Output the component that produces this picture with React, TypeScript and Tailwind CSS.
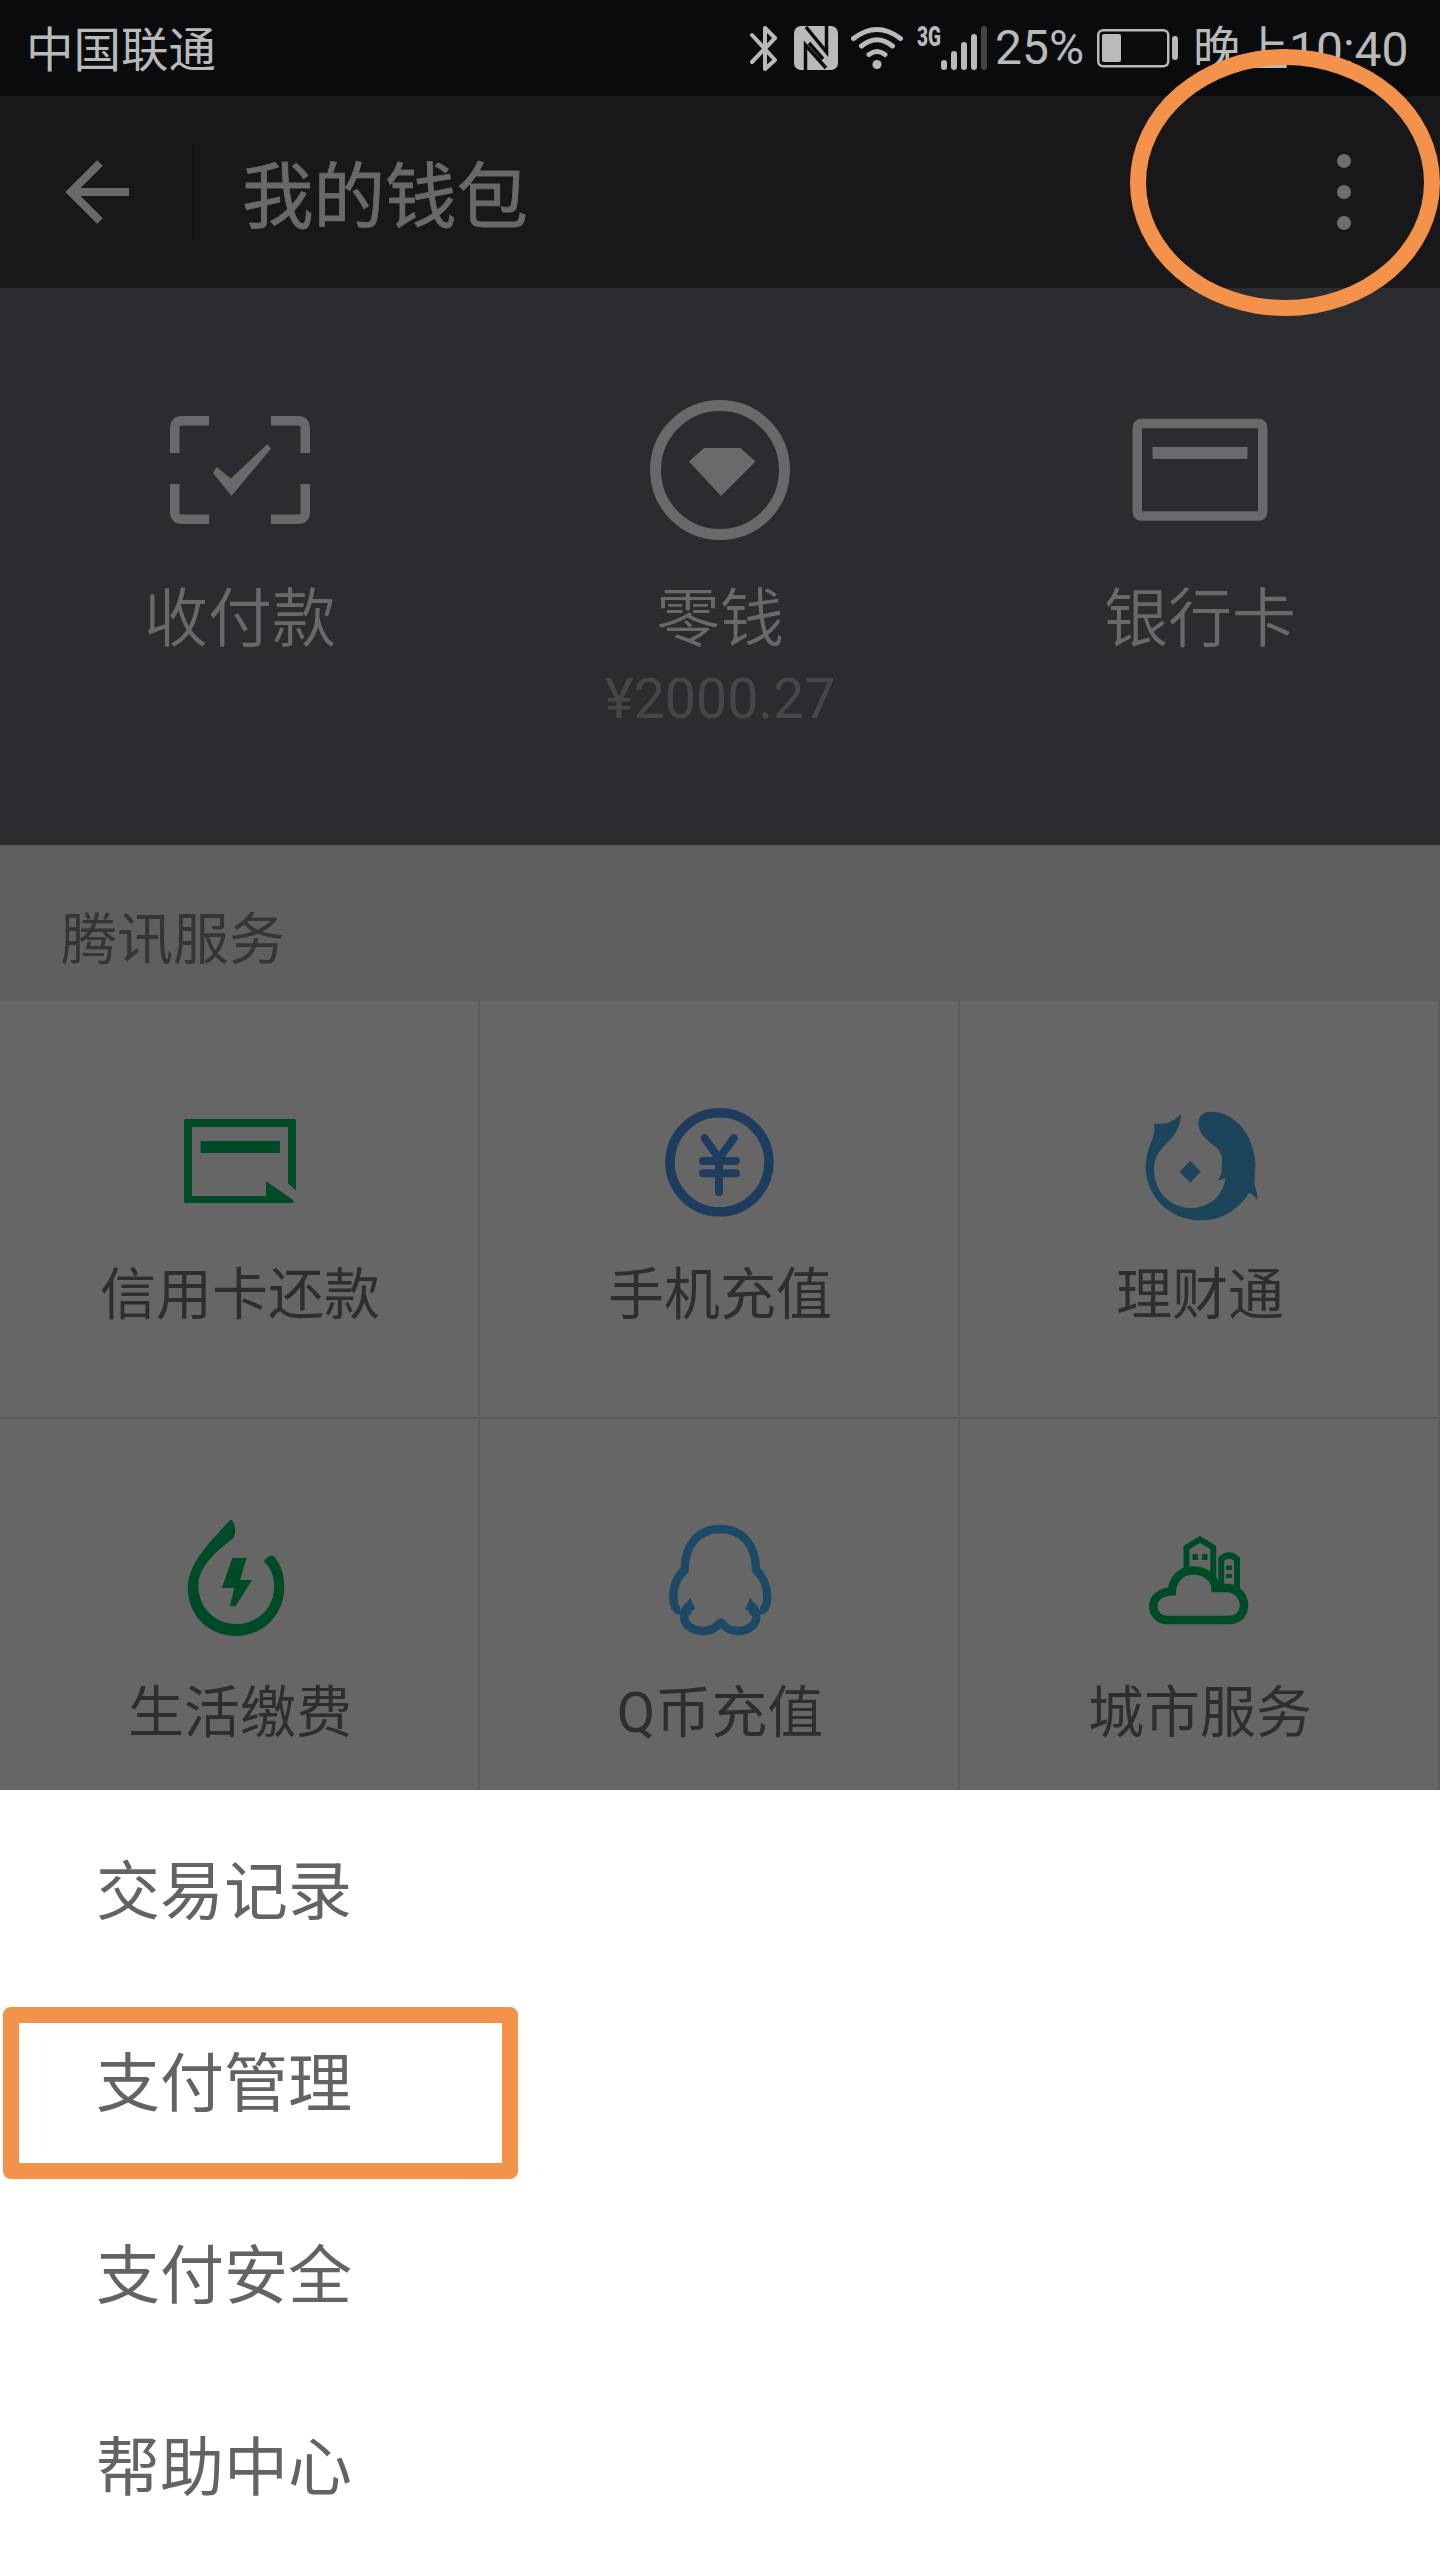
import type { ReactNode } from "react";

interface EntryProps {
  icon: ReactNode;
  label: string;
}

interface WalletEntryProps extends EntryProps {
  amount?: string;
}

const menuItems = ["交易记录", "支付管理", "支付安全", "帮助中心"];

function App() {
  return (
    <div className="relative flex flex-col w-[1440px] h-[2560px] overflow-hidden bg-[#666] font-[Roboto,'Noto_Sans_CJK_SC',sans-serif]">
      <StatusBar />

      {/* Title bar */}
      <header className="flex items-center h-48 bg-[#18181a] text-[#69696a]">
        <svg className="ml-[64px] w-[68px] h-[68px]" viewBox="0 0 68 68" fill="none" stroke="currentColor" strokeWidth="8">
          <path d="M65 34H8M36 5L7 34L36 63" />
        </svg>
        <div className="ml-[60px] w-[2px] h-24 bg-[#121214]" />
        <h1 className="ml-[48px] pt-[11px] text-[71.5px] leading-[96px] [-webkit-text-stroke:0.8px]">我的钱包</h1>
        <div className="flex flex-col gap-[17px] ml-auto mr-[89px]">
          <span className="w-[14px] h-[14px] rounded-full bg-[#6e6e70]" />
          <span className="w-[14px] h-[14px] rounded-full bg-[#6e6e70]" />
          <span className="w-[14px] h-[14px] rounded-full bg-[#6e6e70]" />
        </div>
      </header>

      {/* Wallet shortcuts */}
      <section className="grid grid-cols-3 h-[557px] pt-[112px] bg-[#2b2c30] text-[#69696a]">
        <WalletEntry icon={<ScanIcon />} label="收付款" />
        <WalletEntry icon={<ChangeIcon />} label="零钱" amount="¥2000.27" />
        <WalletEntry icon={<BankCardIcon />} label="银行卡" />
      </section>

      {/* Tencent services */}
      <h2 className="flex items-center h-[156px] pt-[34px] pl-[61px] bg-[#5f5f61] text-[56px] leading-[72px] text-[#353537]">
        腾讯服务
      </h2>
      <section className="grid grid-cols-3 grid-rows-[418px_371px]">
        <ServiceCell icon={<CreditCardIcon />} label="信用卡还款" />
        <ServiceCell icon={<TopUpIcon />} label="手机充值" />
        <ServiceCell icon={<LicaitongIcon />} label="理财通" />
        <ServiceCell icon={<UtilitiesIcon />} label="生活缴费" />
        <ServiceCell icon={<QCoinIcon />} label="Q币充值" />
        <ServiceCell icon={<CityIcon />} label="城市服务" />
      </section>

      {/* Bottom menu */}
      <ul className="flex flex-col h-[770px] pt-[7px] bg-white">
        {menuItems.map((item) => (
          <li
            key={item}
            className="relative flex items-center h-48 shrink-0 pl-24 text-[64px] leading-[80px] text-[#636363]"
          >
            {item}
            {item === "支付管理" && (
              <div className="absolute left-[3px] top-[18px] w-[515px] h-[172px] rounded-[8px] border-[16px] border-[#f2924b]" />
            )}
          </li>
        ))}
      </ul>

      {/* Highlight around the more button */}
      <div className="absolute left-[1130px] top-[49px] w-[310px] h-[267px] rounded-[50%] border-[16px] border-[#f2924b]" />
    </div>
  );
}

function StatusBar() {
  return (
    <div className="flex h-24 bg-[#0a0b0d] text-[#b9baba] text-[48px] leading-[96px]">
      <span className="pl-[26px] pt-[3px] w-[749px] shrink-0 text-[47.5px]">中国联通</span>

      {/* Bluetooth */}
      <svg className="w-[30px] h-24" viewBox="749 0 30 96" fill="none" stroke="currentColor" strokeWidth="4" strokeLinejoin="round" strokeLinecap="round">
        <path d="M752 35L775 60L765 69V28L775 38L752 62" />
      </svg>

      {/* NFC */}
      <svg className="ml-[15px] w-[44px] h-24" viewBox="794 0 44 96" fill="none">
        <rect x="794" y="26" width="44" height="44" rx="7" fill="currentColor" />
        <path d="M805.5 70V45L826 68M826.5 26V52L806 27M809 43L823 59" stroke="#0a0b0d" strokeWidth="3.5" />
      </svg>

      {/* Wi-Fi */}
      <svg className="ml-[12px] w-[54px] h-24" viewBox="850 0 54 96" fill="none" stroke="currentColor" strokeWidth="5" strokeLinecap="round">
        <path d="M853.5 38.5Q877 20.5 900.5 38.5M861.5 46Q877 33.5 892.5 46M869 54.5Q877 48.5 885 54.5" />
        <circle cx="877" cy="64.5" r="4.5" fill="currentColor" stroke="none" />
      </svg>

      {/* Signal */}
      <svg className="ml-[12px] w-[72px] h-24" viewBox="916 0 72 96" fill="currentColor">
        <text x="917" y="46" fontSize="27" fontWeight="900" textLength="24" lengthAdjust="spacingAndGlyphs">
          3G
        </text>
        <rect x="941" y="60" width="6" height="10" rx="3" />
        <rect x="951" y="51" width="6" height="19" rx="3" />
        <rect x="961" y="42" width="6" height="28" rx="3" />
        <rect x="971" y="34" width="6" height="36" rx="3" />
        <rect x="981" y="26" width="6" height="44" rx="3" fill="#424344" />
      </svg>

      <span className="ml-[7px] w-[102px]">25%</span>

      {/* Battery */}
      <svg className="w-[82px] h-24" viewBox="1097 0 82 96" fill="currentColor">
        <rect x="1098.25" y="30.25" width="70" height="36" rx="5" fill="none" stroke="currentColor" strokeWidth="2.5" />
        <rect x="1102" y="34" width="19" height="28" rx="2" />
        <rect x="1172" y="36" width="6" height="24" rx="3" />
      </svg>

      <span className="ml-[14px] pt-[2px] whitespace-nowrap">晚上10:40</span>
    </div>
  );
}

function WalletEntry({ icon, label, amount }: WalletEntryProps) {
  return (
    <div className="flex flex-col items-center">
      {icon}
      <span className="mt-10 text-[64px] leading-[80px] font-[350]">{label}</span>
      {amount && <span className="mt-[4px] text-[55.5px] leading-[72px] text-[#464648]">{amount}</span>}
    </div>
  );
}

function ServiceCell({ icon, label }: EntryProps) {
  return (
    <div className="flex flex-col items-center pt-[101px] pl-[2px] border-r-2 border-b-2 nth-[n+4]:border-b-0 border-[#5c5c5c] text-[#2e2e2e]">
      {icon}
      <span className="mt-[37px] text-[56px] leading-[72px]">{label}</span>
    </div>
  );
}

function ScanIcon() {
  return (
    <svg className="w-[140px] h-[140px]" viewBox="0 0 140 140">
      <path
        d="M4.75 53V28Q4.75 20.75 12 20.75H39M101 20.75H128Q135.25 20.75 135.25 28V53M135.25 84V112Q135.25 119.25 128 119.25H101M39 119.25H12Q4.75 119.25 4.75 112V84"
        fill="none"
        stroke="currentColor"
        strokeWidth="9.5"
      />
      <path d="M43 73L46.5 67L61 78.5L97.5 44L101 48.5L61.5 96Z" fill="currentColor" />
    </svg>
  );
}

function ChangeIcon() {
  return (
    <svg className="w-[140px] h-[140px]" viewBox="0 0 140 140">
      <circle cx="70" cy="70" r="64.5" fill="none" stroke="currentColor" strokeWidth="11" />
      <path d="M54 48H90.5L105.5 61.5L71 96L39 61.5Z" fill="currentColor" />
    </svg>
  );
}

function BankCardIcon() {
  return (
    <svg className="w-[140px] h-[140px]" viewBox="0 0 140 140">
      <rect x="7.25" y="23.5" width="125.5" height="92.5" rx="4" fill="none" stroke="currentColor" strokeWidth="9.5" />
      <rect x="22.5" y="47" width="95" height="12" fill="currentColor" />
    </svg>
  );
}

function CreditCardIcon() {
  return (
    <svg className="w-[120px] h-[120px] text-[#004b27]" viewBox="0 0 120 120" fill="currentColor">
      <path d="M6 17H114Q116 17 116 19V88.5L108 81.5V25H12V94H86V81Q86 79.5 88 80.5L113 98Q115 101 112 101H6Q4 101 4 99V19Q4 17 6 17Z" />
      <rect x="20.5" y="39" width="79.5" height="12" />
    </svg>
  );
}

function TopUpIcon() {
  return (
    <svg className="w-[120px] h-[120px] text-[#1e3d5e]" viewBox="0 0 120 120" fill="none" stroke="currentColor">
      <circle cx="59.5" cy="60.3" r="49.5" strokeWidth="9.5" />
      <path
        d="M44.7 36.3L59 56.5L73.7 36.3M59 56.5V90M43 59H76M43 71.3H76"
        strokeWidth="8"
        strokeLinecap="round"
        strokeLinejoin="round"
      />
    </svg>
  );
}

function LicaitongIcon() {
  return (
    <svg className="w-[120px] h-[120px] overflow-visible text-[#1c445b]" viewBox="0 0 120 120" fill="currentColor">
      <g transform="translate(-10 -7) scale(0.3333)">
        <path d="M153 56C135 78 108 90 72 86C76 102 72 118 66 135C56 160 47 185 47 215C47 305 120 376 212 376C275 376 325 345 357 293C367 296 375 305 382 316C384 300 378 285 374 270C372 255 376 235 376 205C372 120 315 50 242 50C215 50 205 68 205 88C208 120 235 140 260 158C275 172 279 195 275 215C276 230 275 240 264 255C272 255 280 252 287 248C280 300 240 339 182 339C122 339 72 290 72 225C72 180 95 160 120 135C142 110 152 88 153 56Z" />
        <path d="M181 197L212 230L181 263L149 230Z" />
      </g>
    </svg>
  );
}

function UtilitiesIcon() {
  return (
    <svg className="w-[120px] h-[120px] text-[#004b27]" viewBox="0 0 120 120" fill="currentColor">
      <g transform="translate(-180 -40) scale(0.4592 0.3333)">
        <path d="M503 117C512 130 516 155 508 175C470 215 432 260 432 318C432 385 470 432 514 432C560 432 597 385 597 320C597 290 590 262 575 245C578 232 590 222 598 230C612 255 619 285 619 322C619 405 573 468 514 468C453 468 409 405 409 325C409 250 455 190 503 117Z" />
        <path d="M506 234H537L523 300H549L513 379H501L510 324H483Z" />
      </g>
    </svg>
  );
}

function QCoinIcon() {
  return (
    <svg className="w-[120px] h-[120px] text-[#1c4966]" viewBox="0 0 120 120" fill="none" stroke="currentColor">
      <g transform="translate(-5 -10) scale(0.3333)" strokeWidth="25" strokeLinejoin="round">
        <path d="M76 301C62 302 55 285 55 262C55 232 66 200 89 180C89 105 130 57 196 57C262 57 303 105 303 180C325 200 337 232 337 262C337 285 329 302 315 301" />
        <path d="M106 300C80 310 85 335 100 348C125 368 165 368 185 348C190 342 194 338 197 338C200 338 204 342 209 348C230 368 268 368 291 348C307 335 312 310 286 300" />
        <path d="M70 312L86 285Q98 277 106 262Q110 280 121 296L96 312ZM322 312L305 285Q293 277 285 262Q281 280 270 296L295 312Z" fill="currentColor" stroke="none" />
      </g>
    </svg>
  );
}

function CityIcon() {
  return (
    <svg className="w-[120px] h-[120px] text-[#004b27]" viewBox="0 0 120 120" fill="none" stroke="currentColor">
      <path
        d="M31.5 75.5C31.5 60 40 50.5 53 50.5C66 50.5 75.5 59 75.5 68H88C98 69 104 77 104 85C104 94 98 100 89 100H27C19 100 13.3 94 13.3 86C13.3 78 20 72 31.5 71.5"
        strokeWidth="8.5"
      />
      <path d="M46.5 49V27.5L60 19.5L73.2 27.5V64M81.2 66V39Q89 32 97 39V68" strokeWidth="6" />
      <path d="M52.5 34h5.5v6h-5.5zM62 34h5.5v6h-5.5zM86 45.5h6v4.5h-6zM86 54h6v4h-6z" fill="currentColor" stroke="none" />
    </svg>
  );
}

export default App;
